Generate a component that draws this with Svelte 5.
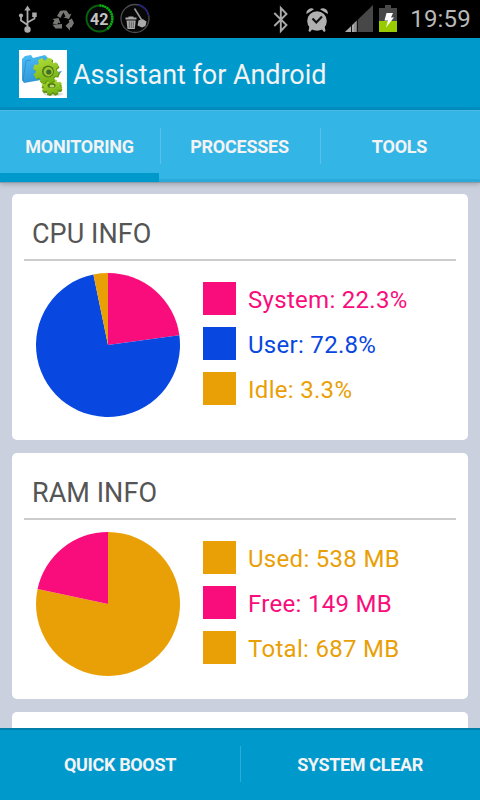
<script lang="ts">
  type Slice = { label: string; color: string; share: number };

  const PINK = '#f90c7b';
  const BLUE = '#0847e0';
  const AMBER = '#e9a006';

  const tabs = ['MONITORING', 'PROCESSES', 'TOOLS'];
  let active = $state(0);

  const cards: { title: string; items: Slice[] }[] = [
    {
      title: 'CPU INFO',
      items: [
        { label: 'System: 22.3%', color: PINK, share: 22.85 },
        { label: 'User: 72.8%', color: BLUE, share: 73.9 },
        { label: 'Idle: 3.3%', color: AMBER, share: 3.25 }
      ]
    },
    {
      title: 'RAM INFO',
      items: [
        { label: 'Used: 538 MB', color: AMBER, share: 78.35 },
        { label: 'Free: 149 MB', color: PINK, share: 21.65 },
        { label: 'Total: 687 MB', color: AMBER, share: 0 }
      ]
    }
  ];

  function slices(items: Slice[]) {
    let from = 0;
    return items
      .filter((item) => item.share > 0)
      .map((item) => {
        const a = (from / 100) * Math.PI * 2;
        from += item.share;
        const b = (from / 100) * Math.PI * 2;
        const point = (t: number) => `${72 + 72 * Math.sin(t)} ${72 - 72 * Math.cos(t)}`;
        const large = item.share > 50 ? 1 : 0;
        return { color: item.color, d: `M72 72L${point(a)}A72 72 0 ${large} 1 ${point(b)}Z` };
      });
  }

  // eight-toothed gear outline
  function gear(cx: number, cy: number, rx: number, ry: number) {
    const points: string[] = [];
    for (let i = 0; i < 8; i++) {
      for (const [offset, k] of [[-0.3, 0.78], [-0.19, 1], [0.19, 1], [0.3, 0.78]]) {
        const t = (i * Math.PI) / 4 + offset + 0.3;
        points.push(`${(cx + rx * k * Math.cos(t)).toFixed(2)},${(cy + ry * k * Math.sin(t)).toFixed(2)}`);
      }
    }
    return points.join(' ');
  }
</script>

<div class="screen">
  <div class="status">
    <svg width="160" height="38" viewBox="0 0 160 38">
      <g stroke="#aaa" fill="none" stroke-width="1.800">
        <path d="M27.500 29V10M27.500 25L21 20.500V15M27.500 22.500L34.500 18.500V15" />
      </g>
      <g fill="#aaa">
        <path d="M27.500 5.500L30.700 10.500H24.300Z" />
        <circle cx="27.500" cy="29.500" r="3.200" />
        <circle cx="21" cy="15.500" r="2.100" />
        <rect x="32.200" y="12.500" width="4.500" height="4.500" />
      </g>
      <g fill="#777873">
        <path d="M57 16L60.200 10.800H64.500L62 15L60.500 18Z" />
        <path d="M62.500 10.500H66.500L69.300 14.500L71.500 13.500L69 19L63.500 17.500L65.500 16.500Z" />
        <path d="M68.500 20.500L71.800 18.500L74 23L71.500 27.500H70V30.500L65.500 25.700L70 21.500V23.500Z" />
        <path d="M52.500 19L58.500 18L60.500 23.500L58.500 22.500L57 24.500L52.500 23.500L54.500 20.500Z" />
        <path d="M52.500 24.800L62 24V28.500H55.500Z" />
      </g>
      <circle cx="99.500" cy="18.500" r="13" fill="#080808" stroke="#07600c" stroke-width="2" />
      <path d="M99.500 5.500A13 13 0 0 1 107 29" fill="none" stroke="#08b312" stroke-width="2.400" stroke-dasharray="1.8 .7" />
      <text x="99.200" y="24.500" text-anchor="middle" class="count">42</text>
      <circle cx="135" cy="18.500" r="14" fill="#080808" stroke="#4c4c50" stroke-width="1.300" />
      <path d="M138 4.800A14 14 0 0 1 148.700 16" fill="none" stroke="#23237c" stroke-width="1.400" />
      <g fill="#aaa">
        <path d="M128.500 16.500H133.500V17.500H136.500V19.500H125.500V17.500H128.500Z" />
        <path d="M126.500 20.500H135.700L134.800 29H127.500Z" />
        <path d="M138.500 20.500L142.500 19L146.500 21.500L145.500 26L142 27.500L137.500 25.500Z" />
      </g>
      <path d="M129.300 21.500V28M131.300 21.500V28M133.300 21.500V28" stroke="#444" stroke-width=".7" />
      <path d="M134.500 8.500L142 20.500" stroke="#999" stroke-width="1.600" />
    </svg>
    <svg class="right" width="138" height="38" viewBox="270 0 138 38">
      <path d="M274.300 13L286.500 25L280.800 31V8L286.500 14L274.300 26" fill="none" stroke="#aaa" stroke-width="1.900" />
      <g fill="#b0b0b0">
        <circle cx="317" cy="21" r="9.800" />
        <path d="M306.500 14A4.800 4.800 0 0 1 314 9.300ZM320 9.300A4.800 4.800 0 0 1 327.700 14Z" />
        <path d="M309.500 26L312.500 29L310 32L308.500 31ZM324.500 26L321.500 29L324 32L325.500 31Z" />
      </g>
      <path d="M312.500 18.500L316.300 22.500L322 16.500" fill="none" stroke="#111" stroke-width="2.200" />
      <path d="M345 32L373 5V32Z" fill="#474747" />
      <path d="M345 32L351 26.200V32ZM352 32V25.200L357 20.400V32Z" fill="#aaa" />
      <path d="M351.500 32V25.500M357.500 32V20" stroke="#111" />
      <path d="M355 32V22.500M356.500 32V21" stroke="#777" />
      <path d="M379 8H385V5H391V8H397V21H379Z" fill="#484848" />
      <path d="M379 21H397V32H379Z" fill="#99cc00" />
      <path d="M386.500 13H393L391 17.500H394L386 27.500L388 20.500H384.500Z" fill="#fff" />
    </svg>
    <span class="clock">19:59</span>
  </div>

  <header class="action-bar">
    <svg class="logo" width="48" height="48" viewBox="0 0 48 48">
      <defs>
        <linearGradient id="folder" x2="0.4" y2="1">
          <stop offset="0" stop-color="#4bbdf5" />
          <stop offset="1" stop-color="#2d93d6" />
        </linearGradient>
        <linearGradient id="green" x2="0.3" y2="1">
          <stop offset="0" stop-color="#b4df3a" />
          <stop offset="1" stop-color="#78b417" />
        </linearGradient>
      </defs>
      <rect width="48" height="48" fill="#fff" />
      <path d="M3 9L6 6L12 5L14 8L26 5L29 8L30 24L43 21L39 26L22 30L5 33L3 30Z" fill="url(#folder)" />
      <path d="M4 31L7 11L12 10" fill="none" stroke="#2786c9" stroke-width=".7" />
      <ellipse cx="34" cy="44" rx="10" ry="2" fill="#ddd" />
      <polygon points={gear(33, 38.500, 10.500, 7.500)} fill="#5f9412" />
      <polygon points={gear(33, 36.500, 10.500, 7.500)} fill="url(#green)" />
      <ellipse cx="32.500" cy="35.500" rx="4" ry="2.500" fill="#4c7913" />
      <ellipse cx="33" cy="36.200" rx="2.400" ry="1.400" fill="#bddb74" />
      <polygon points={gear(28, 21.500, 13, 13)} fill="#66990f" />
      <polygon points={gear(27, 20.500, 13, 13)} fill="url(#green)" />
      <circle cx="29" cy="21.500" r="6" fill="#4e7a12" />
      <circle cx="29.300" cy="21.800" r="4.700" fill="#9ac832" />
      <circle cx="29.800" cy="22" r="2.600" fill="#3d6b28" />
    </svg>
    <h1>Assistant for Android</h1>
  </header>

  <nav class="tabs">
    {#each tabs as tab, i}
      <button class:active={active === i} onclick={() => (active = i)}>{tab}</button>
    {/each}
  </nav>

  <main>
    {#each cards as card}
      <section class="card">
        <h2>{card.title}</h2>
        <div class="content">
          <svg width="144" height="144" viewBox="0 0 144 144">
            {#each slices(card.items) as slice}
              <path d={slice.d} fill={slice.color} />
            {/each}
          </svg>
          <ul>
            {#each card.items as item}
              <li style="color: {item.color}">
                <span class="swatch"></span>
                <span>{item.label}</span>
              </li>
            {/each}
          </ul>
        </div>
      </section>
    {/each}
    <section class="card"></section>
  </main>

  <footer>
    <button>QUICK BOOST</button>
    <button>SYSTEM CLEAR</button>
  </footer>
</div>

<style>
  :global(body) {
    margin: 0;
  }

  .screen {
    display: flex;
    flex-direction: column;
    width: 480px;
    height: 800px;
    overflow: hidden;
    background: #cad0dd;
    font-family: Roboto, sans-serif;
  }

  .status {
    display: flex;
    flex: none;
    height: 38px;
    background: #000;
  }

  .status .right {
    margin-left: 110px;
  }

  .count {
    font: bold 16px Roboto, sans-serif;
    fill: #c4c4c4;
  }

  .clock {
    flex: 1;
    padding-right: 9px;
    text-align: right;
    font-size: 24px;
    line-height: 39px;
    letter-spacing: 0.2px;
    color: #b8b8b8;
  }

  .action-bar {
    display: flex;
    flex: none;
    align-items: center;
    gap: 6px;
    box-sizing: border-box;
    height: 72px;
    padding-left: 19px;
    border-bottom: 3px solid #008fc2;
    background: #0099cc;
  }

  .logo {
    margin-top: 3px;
  }

  h1 {
    margin: 5px 0 0;
    font-size: 27px;
    font-weight: 400;
    letter-spacing: -0.05px;
    color: #f3f3f3;
  }

  button {
    position: relative;
    flex: 1;
    padding: 0 1px 0 0;
    border: 0;
    background: none;
    font: bold 18px Roboto, sans-serif;
    letter-spacing: -0.25px;
    color: #f3f3f3;
  }

  button + button::before {
    content: '';
    position: absolute;
    left: 0;
    top: 17px;
    width: 1px;
    height: 36px;
    background: rgba(255, 255, 255, 0.18);
  }

  .tabs {
    z-index: 1;
    display: flex;
    flex: none;
    box-sizing: border-box;
    height: 72px;
    border-top: 1px solid #4bbce6;
    background: linear-gradient(#33b5e5 68px, #2ba9d9 68px);
    box-shadow: 0 1px 0 #8d9cab, 0 2px 5px rgba(0, 0, 0, 0.25);
  }

  .tabs .active::after {
    content: '';
    position: absolute;
    left: 0;
    right: 1px;
    bottom: 0;
    height: 9px;
    background: #0099cc;
  }

  main {
    display: flex;
    flex: 1;
    flex-direction: column;
    gap: 13px;
    min-height: 0;
    padding: 12px 12px 0;
    overflow: hidden;
  }

  .card {
    flex: none;
    box-sizing: border-box;
    height: 246px;
    padding: 12px;
    border-radius: 5px;
    background: #fff;
  }

  h2 {
    height: 53px;
    margin: 0;
    padding-left: 8px;
    border-bottom: 2px solid #ccc;
    font-size: 27px;
    font-weight: 400;
    line-height: 56px;
    letter-spacing: 0.05px;
    color: #555;
  }

  .content {
    display: flex;
    gap: 23px;
    padding: 12px 12px 0;
  }

  ul {
    display: grid;
    gap: 12px;
    align-content: start;
    margin: 0;
    padding: 9px 0 0;
    list-style: none;
  }

  li {
    display: flex;
    gap: 12px;
    height: 33px;
    font-size: 24px;
    line-height: 36px;
    letter-spacing: 0.3px;
    white-space: nowrap;
  }

  .swatch {
    width: 33px;
    background: currentColor;
  }

  footer {
    display: flex;
    flex: none;
    box-sizing: border-box;
    height: 72px;
    border-top: 2px solid #007fab;
    background: #0099cc;
  }

  footer button {
    padding: 0 0 2px;
    letter-spacing: -0.35px;
  }

  footer button + button::before {
    top: 16px;
  }
</style>
